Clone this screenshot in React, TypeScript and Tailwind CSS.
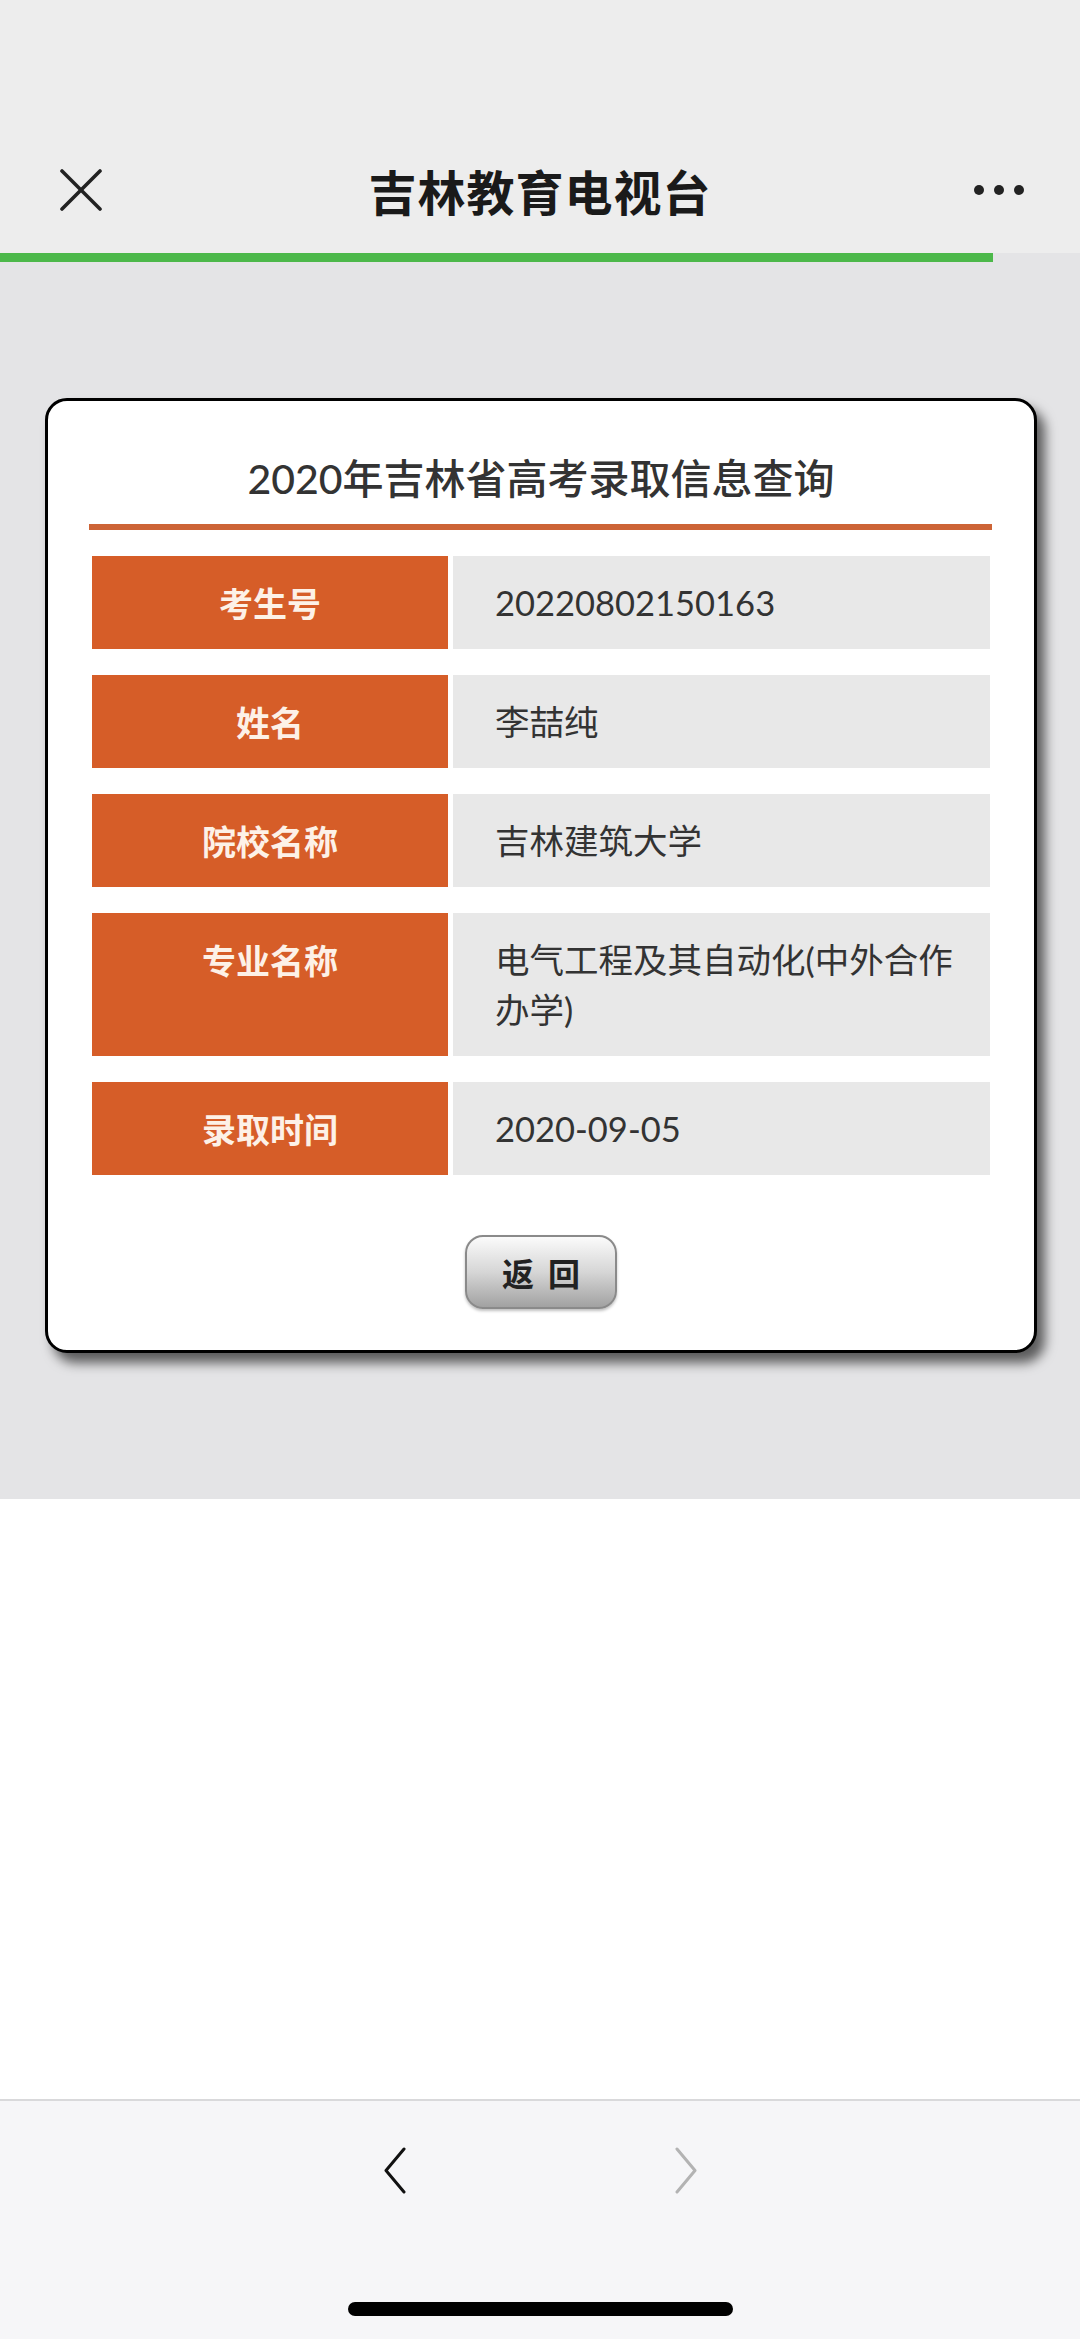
import React from "react";

const rows: { label: string; value: string; tall?: boolean }[] = [
  { label: "考生号", value: "20220802150163" },
  { label: "姓名", value: "李喆纯" },
  { label: "院校名称", value: "吉林建筑大学" },
  { label: "专业名称", value: "电气工程及其自动化(中外合作办学)", tall: true },
  { label: "录取时间", value: "2020-09-05" },
];

export default function App() {
  return (
    <div
      className="w-[1080px] min-h-[2339px] flex flex-col bg-white"
      style={{ fontFamily: "'Noto Sans CJK SC', 'Noto Sans', sans-serif" }}
    >
      {/* Nav bar */}
      <div className="h-[253px] bg-[#ededed] flex flex-col pt-[146px]">
        <div className="h-[88px] flex items-center">
          <div className="w-[180px] pl-[60px] flex items-center">
            <svg width="42" height="42" viewBox="0 0 42 42">
              <line x1="2" y1="2" x2="40" y2="40" stroke="#222" strokeWidth="3.6" strokeLinecap="round" />
              <line x1="40" y1="2" x2="2" y2="40" stroke="#222" strokeWidth="3.6" strokeLinecap="round" />
            </svg>
          </div>
          <div className="flex-1 text-center text-[48px] leading-[60px] font-bold text-[#1a1a1a] tracking-[1px]">
            吉林教育电视台
          </div>
          <div className="w-[180px] pr-[56px] flex items-center justify-end gap-[10px]">
            <span className="w-[10px] h-[10px] rounded-full bg-[#222]" />
            <span className="w-[10px] h-[10px] rounded-full bg-[#222]" />
            <span className="w-[10px] h-[10px] rounded-full bg-[#222]" />
          </div>
        </div>
      </div>

      {/* Content gray area */}
      <div className="h-[1246px] bg-[#e4e4e6] flex flex-col">
        <div className="h-[9px] w-[993px] bg-[#4cb84a]" />
        <div className="mt-[136px] ml-[45px] w-[992px] bg-white border-[3px] border-black rounded-[22px] shadow-[8px_10px_12px_rgba(0,0,0,0.6)] flex flex-col pt-[53px] pb-[41px]">
          <div
            className="text-center text-[41px] leading-[50px] font-medium text-[#333]"
            style={{ fontFamily: "Lato, 'Noto Sans CJK SC', sans-serif" }}
          >
            2020年吉林省高考录取信息查询
          </div>
          <div className="mt-[20px] ml-[41px] mr-[42px] h-[6px] bg-[#cd6436]" />
          <div className="mt-[26px] px-[44px] flex flex-col gap-[26px]">
            {rows.map((r) => (
              <div key={r.label} className="flex gap-[5px]">
                <div className="w-[356px] shrink-0 bg-[#d65d28] text-center text-[34px] leading-[50px] font-bold text-[#fdf1e7] pt-[22px] pb-[21px]">
                  {r.label}
                </div>
                <div
                  className="flex-1 bg-[#e8e8e8] text-[34.5px] leading-[50px] text-[#333] pl-[42px] pr-[20px] pt-[22px] pb-[21px]"
                  style={{ fontFamily: "Lato, 'Noto Sans CJK SC', sans-serif" }}
                >
                  {r.value}
                </div>
              </div>
            ))}
          </div>
          <div className="mt-[60px] flex justify-center">
            <div className="w-[152px] h-[74px] rounded-[18px] border-2 border-[#8a8a8a] bg-gradient-to-b from-[#fbfbfb] via-[#d6d6d6] to-[#a2a2a2] shadow-[0_2px_3px_rgba(0,0,0,0.25)] flex items-center justify-center gap-[14px] text-[32px] font-bold text-[#222]">
              <span>返</span>
              <span>回</span>
            </div>
          </div>
        </div>
      </div>

      {/* White area */}
      <div className="h-[600px] bg-white" />

      {/* Bottom toolbar */}
      <div className="h-[240px] bg-[#f6f6f8] border-t-2 border-[#d9d9db] flex flex-col items-center pt-[46px]">
        <div className="flex items-center justify-center gap-[267px] h-[47px]">
          <svg width="24" height="47" viewBox="0 0 24 47">
            <polyline points="21,2 3,23.5 21,45" fill="none" stroke="#111" strokeWidth="3" strokeLinecap="round" strokeLinejoin="round" />
          </svg>
          <svg width="24" height="47" viewBox="0 0 24 47">
            <polyline points="3,2 21,23.5 3,45" fill="none" stroke="#b3b3b3" strokeWidth="3" strokeLinecap="round" strokeLinejoin="round" />
          </svg>
        </div>
        <div className="mt-[108px] w-[385px] h-[14px] rounded-full bg-black" />
      </div>
    </div>
  );
}
